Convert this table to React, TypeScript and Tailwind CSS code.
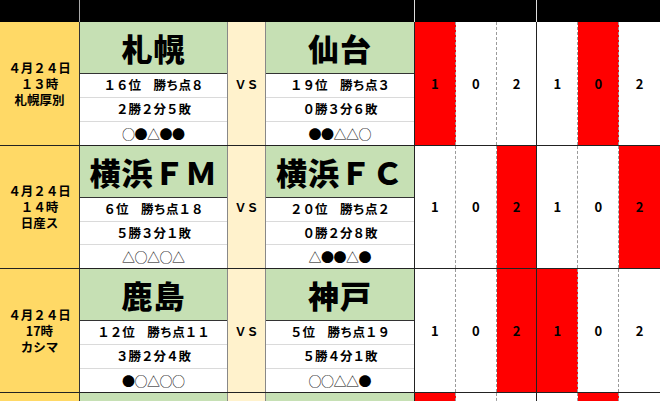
import React from 'react';

type Team = { name: string; rank: string; record: string; form: string };
type Match = {
  date: string;
  time: string;
  venue: string;
  home: Team;
  away: Team;
  red: number[];
  height: string;
};

const matches: Match[] = [
  {
    date: '４月２４日',
    time: '１３時',
    venue: '札幌厚別',
    home: { name: '札幌', rank: '１６位　勝ち点８', record: '２勝２分５敗', form: '○●△●●' },
    away: { name: '仙台', rank: '１９位　勝ち点３', record: '０勝３分６敗', form: '●●△△○' },
    red: [0, 4],
    height: 'h-[124px]',
  },
  {
    date: '４月２４日',
    time: '１４時',
    venue: '日産ス',
    home: { name: '横浜ＦＭ', rank: '６位　勝ち点１８', record: '５勝３分１敗', form: '△○△○△' },
    away: { name: '横浜ＦＣ', rank: '２０位　勝ち点２', record: '０勝２分８敗', form: '△●●△●' },
    red: [2, 5],
    height: 'h-[123px]',
  },
  {
    date: '４月２４日',
    time: '17時',
    venue: 'カシマ',
    home: { name: '鹿島', rank: '１２位　勝ち点１１', record: '３勝２分４敗', form: '●○△○○' },
    away: { name: '神戸', rank: '５位　勝ち点１９', record: '５勝４分１敗', form: '○○△△●' },
    red: [2, 3],
    height: 'h-[124px]',
  },
];

const scores = ['1', '0', '2', '1', '0', '2'];

const cols = 'grid grid-cols-[80px_148px_38px_149px_repeat(6,1fr)]';

function scoreBorder(i: number) {
  if (i === 2) return 'border-r border-[#222]';
  if (i === 5) return '';
  return 'border-r border-dashed border-[#9a9a9a]';
}

function TeamCell({ team, edge }: { team?: Team; edge: string }) {
  return (
    <div className={`flex flex-col ${edge}`}>
      <div className="h-[52px] shrink-0 bg-[#c6e0b4] border-b border-[#333] flex items-center justify-center">
        <span className="text-[31px] font-black leading-none tracking-[1px]">{team?.name}</span>
      </div>
      {team && (
        <>
          <div className="flex-1 bg-white border-b border-[#dadada] flex items-center justify-center text-[12.5px] font-bold">
            {team.rank}
          </div>
          <div className="flex-1 bg-white border-b border-[#dadada] flex items-center justify-center text-[12.5px] font-bold">
            {team.record}
          </div>
          <div className="flex-1 bg-white flex items-center justify-center text-[13px] leading-none">
            {Array.from(team.form).map((c, i) => (
              <span key={i} className="w-[12.5px] flex justify-center overflow-visible">
                {c}
              </span>
            ))}
          </div>
        </>
      )}
    </div>
  );
}

function MatchRow({ m }: { m?: Match }) {
  const red = m ? m.red : [0, 4];
  return (
    <div className={`${cols} ${m ? m.height : 'h-[40px]'} border-b border-[#222]`}>
      <div className="bg-[#ffd966] border-r border-[#333] flex flex-col items-center justify-center text-[12.5px] font-bold">
        {m && (
          <>
            <div className="h-[16px] leading-[16px]">{m.date}</div>
            <div className="h-[16px] leading-[16px]">{m.time}</div>
            <div className="h-[16px] leading-[16px]">{m.venue}</div>
          </>
        )}
      </div>
      <TeamCell team={m?.home} edge="border-r border-[#888]" />
      <div className="bg-[#fff2cc] border-r border-[#888] flex items-center justify-center text-[12px] font-bold">
        {m && 'ＶＳ'}
      </div>
      <TeamCell team={m?.away} edge="border-r border-[#222]" />
      {scores.map((s, i) => (
        <div
          key={i}
          className={`${red.includes(i) ? 'bg-[#ff0000]' : 'bg-white'} ${scoreBorder(i)} flex items-center justify-center text-[13px] font-bold`}
        >
          {m && s}
        </div>
      ))}
    </div>
  );
}

export default function App() {
  return (
    <div
      className="w-[660px] h-[401px] overflow-hidden bg-white text-black"
      style={{ fontFamily: '"Noto Sans CJK JP", "Noto Sans", sans-serif' }}
    >
      {/* Header */}
      <div className={`${cols} h-[22px] bg-black`}>
        <div className="border-r border-[#aaa]" />
        <div />
        <div />
        <div className="border-r border-[#ddd]" />
        <div />
        <div />
        <div className="border-r border-[#ddd]" />
        <div />
        <div />
        <div />
      </div>

      {matches.map((m, i) => (
        <MatchRow key={i} m={m} />
      ))}
      <MatchRow />
    </div>
  );
}
